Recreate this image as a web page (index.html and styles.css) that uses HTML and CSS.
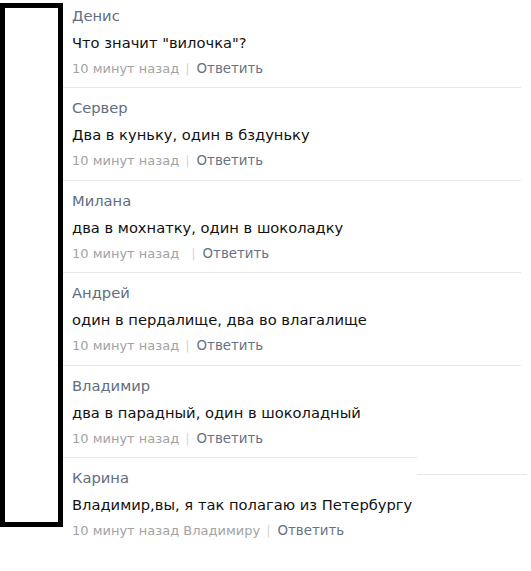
FILE: index.html
```html
<!DOCTYPE html>
<html lang="ru">
<head>
<meta charset="utf-8">
<link rel="stylesheet" href="styles.css">
</head>
<body>
<div class="page">
  <div class="frame"></div>
  <ul class="comments">
    <li class="comment">
      <div class="name">Денис</div>
      <div class="text">Что значит "вилочка"?</div>
      <div class="meta"><span class="time">10 минут назад</span><span class="sep">|</span><span class="reply">Ответить</span></div>
    </li>
    <li class="comment">
      <div class="name">Сервер</div>
      <div class="text">Два в куньку, один в бздуньку</div>
      <div class="meta"><span class="time">10 минут назад</span><span class="sep">|</span><span class="reply">Ответить</span></div>
    </li>
    <li class="comment">
      <div class="name">Милана</div>
      <div class="text">два в мохнатку, один в шоколадку</div>
      <div class="meta"><span class="time">10 минут назад</span><span class="sep wide">|</span><span class="reply">Ответить</span></div>
    </li>
    <li class="comment">
      <div class="name">Андрей</div>
      <div class="text">один в пердалище, два во влагалище</div>
      <div class="meta"><span class="time">10 минут назад</span><span class="sep">|</span><span class="reply">Ответить</span></div>
    </li>
    <li class="comment short">
      <div class="name">Владимир</div>
      <div class="text">два в парадный, один в шоколадный</div>
      <div class="meta"><span class="time">10 минут назад</span><span class="sep">|</span><span class="reply">Ответить</span></div>
    </li>
    <li class="comment last">
      <div class="name">Карина</div>
      <div class="text">Владимир,вы, я так полагаю из Петербургу</div>
      <div class="meta"><span class="time">10 минут назад Владимиру</span><span class="sep">|</span><span class="reply">Ответить</span></div>
    </li>
  </ul>
</div>
</body>
</html>
```
FILE: styles.css
```css
html, body {
  margin: 0;
  padding: 0;
  background: #ffffff;
}
body {
  font-family: "DejaVu Sans", Tahoma, sans-serif;
  font-size: 15px;
  width: 531px;
  height: 571px;
  overflow: hidden;
}
.page {
  display: flex;
  align-items: flex-start;
}
.frame {
  flex: none;
  width: 53px;
  height: 514px;
  margin-top: 3px;
  border: 5.5px solid #000;
  background: #fff;
}
.comments {
  list-style: none;
  margin: 0;
  padding: 0;
  width: 458px;
}
.comment {
  position: relative;
  padding: 7px 0 5px 9px;
  border-bottom: 1px solid #e6e8eb;
}
.comment:first-child {
  padding-top: 3px;
}
.comment.short {
  margin-right: 104px;
}
.comment.last {
  border-bottom: none;
}
.comment.last::before {
  content: "";
  position: absolute;
  left: 354px;
  top: 16px;
  width: 110px;
  height: 1px;
  background: #e8e8e8;
}
.name {
  line-height: 26px;
  color: #5f6e80;
  font-size: 14.7px;
}
.text {
  line-height: 27px;
  color: #111;
  font-size: 14.7px;
}
.meta {
  line-height: 26.4px;
  color: #a3a3a3;
  font-size: 13px;
}
.reply {
  font-size: 13.4px;
}
.sep {
  color: #d6d6d6;
  margin: 0 7px 0 6px;
}
.sep.wide {
  margin-left: 12px;
}
.reply {
  color: #677384;
}
```
